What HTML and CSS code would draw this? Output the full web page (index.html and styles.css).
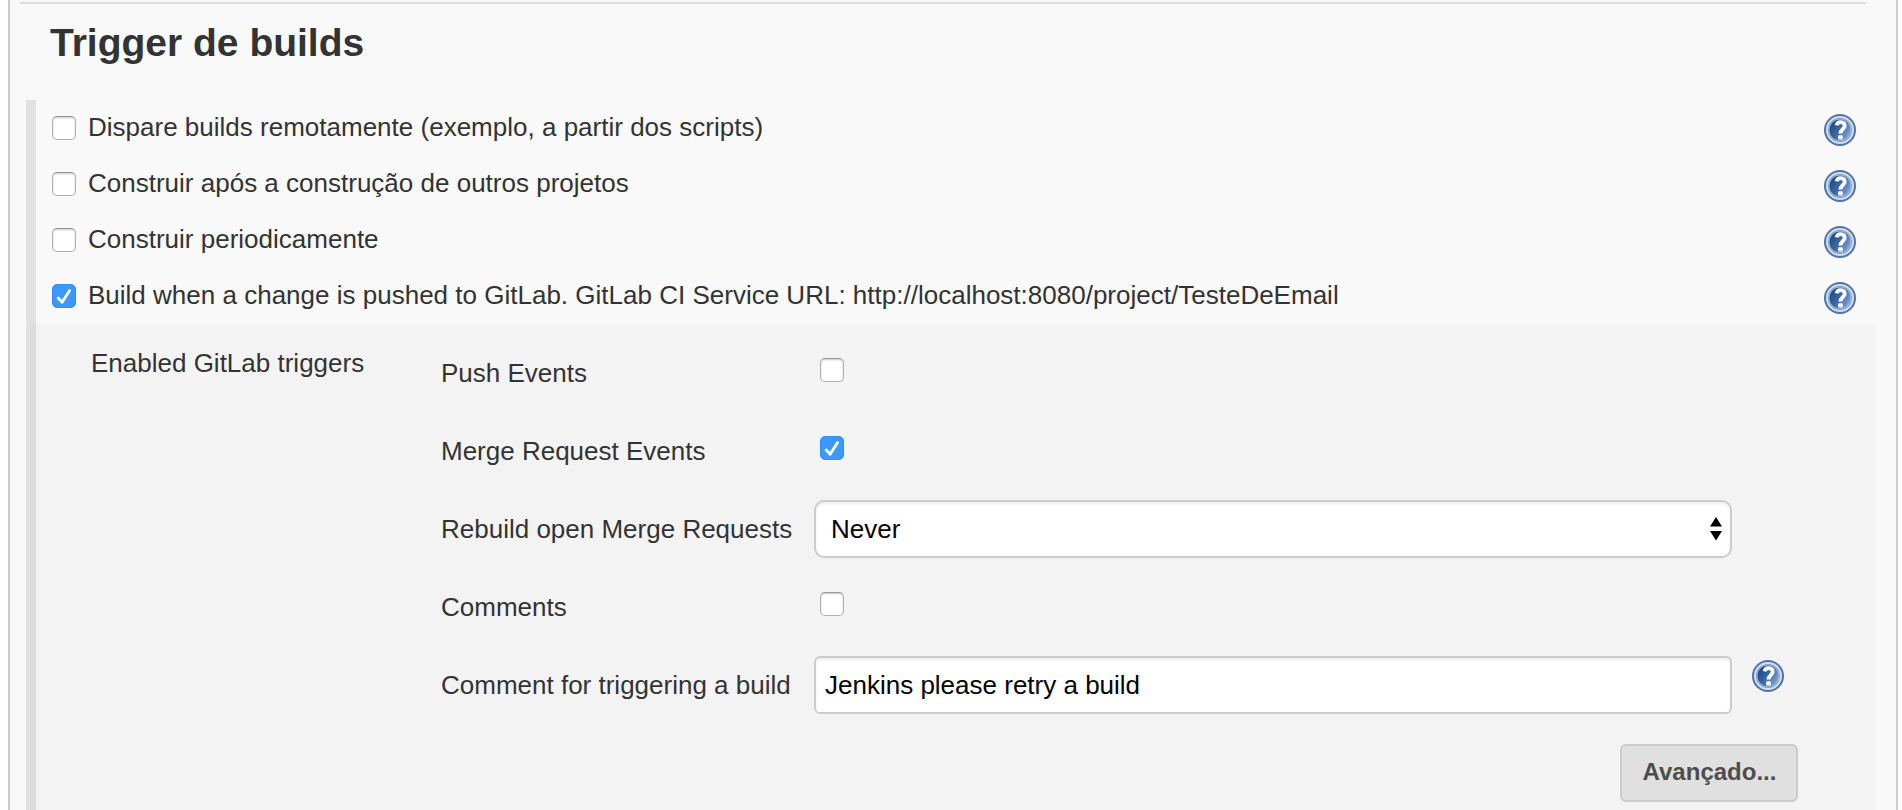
FILE: index.html
```html
<!DOCTYPE html>
<html lang="pt-BR">
<head>
<meta charset="utf-8">
<title>Trigger de builds</title>
<link rel="stylesheet" href="styles.css">
</head>
<body>
<svg class="defs" width="0" height="0" aria-hidden="true">
  <defs>
    <linearGradient id="blue" x1="0" y1="0.2" x2="1" y2="0.8">
      <stop offset="0" stop-color="#1a4585"/>
      <stop offset="0.45" stop-color="#3a66a4"/>
      <stop offset="1" stop-color="#86a9d6"/>
    </linearGradient>
    <symbol id="help" viewBox="0 0 32 32">
      <circle cx="16" cy="16" r="16" fill="#4f73aa"/>
      <circle cx="16" cy="16" r="13" fill="#7291bf" stroke="#d3deed" stroke-width="2"/>
      <circle cx="16" cy="16" r="11" fill="url(#blue)" stroke="#b9cbe4" stroke-width="0.8"/>
      <path d="M12.600 11.400c.4-2.200 2-3.300 4.100-3.200 2.300.1 4 1.500 4 3.600 0 3.200-4.200 3.600-4.200 7.600" fill="none" stroke="#fff" stroke-width="3.800"/>
      <rect x="14.200" y="21.300" width="4.600" height="4.200" rx="1" fill="#fff"/>
    </symbol>
  </defs>
</svg>
<main class="panel">
  <hr class="rule">
  <h1 class="title"><span>Trigger de builds</span></h1>
  <section class="triggers">
    <div class="trigger"><input class="check" type="checkbox"><label class="label">Dispare builds remotamente (exemplo, a partir dos scripts)</label><svg class="help"><use href="#help"/></svg></div>
    <div class="trigger"><input class="check" type="checkbox"><label class="label">Construir após a construção de outros projetos</label><svg class="help"><use href="#help"/></svg></div>
    <div class="trigger"><input class="check" type="checkbox"><label class="label">Construir periodicamente</label><svg class="help"><use href="#help"/></svg></div>
    <div class="trigger"><input class="check" type="checkbox" checked><label class="label">Build when a change is pushed to GitLab. GitLab CI Service URL: http://localhost:8080/project/TesteDeEmail</label><svg class="help"><use href="#help"/></svg></div>
    <div class="details">
      <div class="group">Enabled GitLab triggers</div>
      <div class="options">
        <div class="option"><span class="name">Push Events</span><input class="check" type="checkbox"></div>
        <div class="option"><span class="name">Merge Request Events</span><input class="check" type="checkbox" checked></div>
        <div class="option"><span class="name">Rebuild open Merge Requests</span>
          <div class="field select"><span>Never</span><svg class="arrows" viewBox="0 0 12 24"><path d="M6 0l6 9.500H0zM0 14h12l-6 9.500z"/></svg></div>
        </div>
        <div class="option"><span class="name">Comments</span><input class="check" type="checkbox"></div>
        <div class="option"><span class="name">Comment for triggering a build</span>
          <input class="field text" type="text" value="Jenkins please retry a build"><svg class="help"><use href="#help"/></svg>
        </div>
        <div class="actions"><button class="advanced" type="button">Avançado...</button></div>
      </div>
    </div>
  </section>
</main>
</body>
</html>
```

FILE: styles.css
```css
* { box-sizing: border-box; }
body {
  margin: 0;
  height: 810px;
  overflow: hidden;
  background: #fff;
  color: #333;
  font: 26px/30px "Liberation Sans", Arial, sans-serif;
}
.defs { display: block; height: 0; }
.panel {
  display: flex;
  flex-direction: column;
  height: 810px;
  margin: 0 4px 0 8px;
  padding: 2px 20px 0 16px;
  background: #f9f9f9;
  border: solid #ccc;
  border-width: 0 2px;
}
.rule {
  flex: none;
  height: 2px;
  margin: 0 10px 0 -6px;
  border: 0;
  background: #ddd;
}
.title {
  flex: none;
  height: 96px;
  margin: 0;
  padding: 14px 0 0 24px;
  font-size: 39px;
  line-height: 50px;
}
.triggers {
  flex: 1;
  background: linear-gradient(#e1e1e1, #e1e1e1) left / 10px 100% no-repeat;
}
.trigger {
  display: flex;
  align-items: center;
  height: 56px;
  padding: 0 20px 0 26px;
}
.label { flex: 1; padding: 0 0 2px 12px; letter-spacing: .005px; white-space: nowrap; }
.trigger .help { margin-top: 4px; }
.help { display: block; flex: none; width: 32px; height: 32px; }
.check {
  appearance: none;
  flex: none;
  width: 24px;
  height: 24px;
  margin: 0;
  border: 1px solid #b0b0b0;
  border-top-color: #969696;
  border-radius: 5px;
  background: #fff;
  box-shadow: inset 0 1px 2px rgba(0, 0, 0, .22);
}
.check:checked {
  border-color: #328bf3;
  background: #3b99fc url("data:image/svg+xml,%3Csvg xmlns='http://www.w3.org/2000/svg' viewBox='0 0 24 24'%3E%3Cpath d='M6.200 14l4 4.200L17.600 6.600' fill='none' stroke='%23fff' stroke-width='2.800' stroke-linecap='round' stroke-linejoin='round'/%3E%3C/svg%3E") center / 24px 24px no-repeat;
  box-shadow: none;
}
.details {
  display: flex;
  height: 486px;
  margin-left: 4px;
  background: rgba(0, 0, 0, .024);
}
.group { width: 410px; padding: 24px 0 0 61px; }
.options { flex: 1; padding-top: 10px; }
.option { display: flex; align-items: center; height: 78px; }
.name { width: 374px; padding-left: 1px; white-space: nowrap; }
.option .check { margin: 0 0 6px 6px; }
.field {
  width: 918px;
  height: 58px;
  border: 2px solid #ccc;
  background: #fff;
  color: #000;
  box-shadow: inset 0 2px 3px rgba(0, 0, 0, .075);
}
.select {
  display: flex;
  align-items: center;
  justify-content: space-between;
  padding: 0 8px 0 15px;
  border-radius: 10px;
}
.arrows { width: 12px; height: 24px; }
.text {
  padding: 0 9px;
  border-radius: 6px;
  font: inherit;
}
.option .help { margin: 0 0 18px 20px; }
.actions { display: flex; justify-content: flex-end; padding: 20px 78px 0 0; }
.advanced {
  width: 178px;
  height: 58px;
  padding: 0 0 2px 1px;
  border: 2px solid #ccc;
  border-radius: 6px;
  background: #e0e0e0;
  color: #4d4d4d;
  font: bold 24px "Liberation Sans", Arial, sans-serif;
}
```
